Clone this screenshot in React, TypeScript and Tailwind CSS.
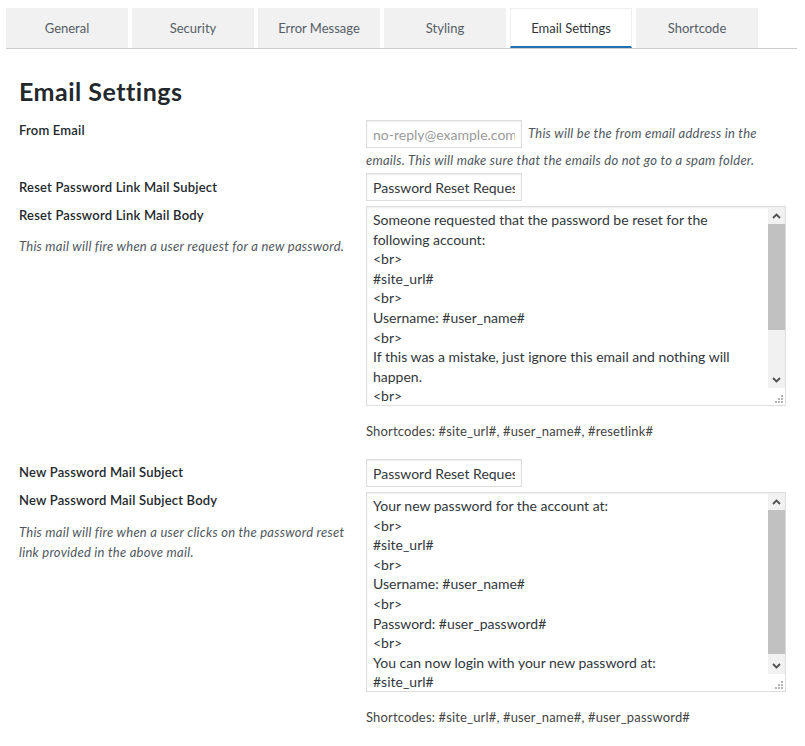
import React from "react";

const tabs = ["General", "Security", "Error Message", "Styling", "Email Settings", "Shortcode"];

const resetBody = [
  "Someone requested that the password be reset for the",
  "following account:",
  "<br>",
  "#site_url#",
  "<br>",
  "Username: #user_name#",
  "<br>",
  "If this was a mistake, just ignore this email and nothing will",
  "happen.",
  "<br>",
];

const newBody = [
  "Your new password for the account at:",
  "<br>",
  "#site_url#",
  "<br>",
  "Username: #user_name#",
  "<br>",
  "Password: #user_password#",
  "<br>",
  "You can now login with your new password at:",
  "#site_url#",
];

function Chevron({ up }: { up?: boolean }) {
  return (
    <svg width="9" height="6" viewBox="0 0 9 6" className="block">
      <polyline
        points={up ? "1,5 4.5,1.5 8,5" : "1,1 4.5,4.5 8,1"}
        fill="none"
        stroke="#505050"
        strokeWidth="1.8"
      />
    </svg>
  );
}

function Grip() {
  return (
    <svg width="8" height="8" viewBox="0 0 8 8" className="block">
      <g fill="#b4b4b4">
        <rect x="6" y="0" width="2" height="2" />
        <rect x="3" y="3" width="2" height="2" />
        <rect x="6" y="3" width="2" height="2" />
        <rect x="0" y="6" width="2" height="2" />
        <rect x="3" y="6" width="2" height="2" />
        <rect x="6" y="6" width="2" height="2" />
      </g>
    </svg>
  );
}

function FakeTextarea({ lines, thumb }: { lines: string[]; thumb: string }) {
  return (
    <div className="flex h-[200px] w-full overflow-hidden border border-[#dddddd] bg-white shadow-[inset_0_1px_2px_rgba(0,0,0,0.07)]">
      <div className="min-w-0 flex-1 overflow-hidden pl-[6px] pt-[3px] text-[14px] leading-[1.4] text-[#32373c]">
        {lines.map((l, i) => (
          <div key={i} className="whitespace-nowrap">
            {l}
          </div>
        ))}
      </div>
      <div className="flex w-[17px] flex-none flex-col">
        <div className="flex h-[17px] items-center justify-center bg-[#f1f1f1]">
          <Chevron up />
        </div>
        <div className="flex-1 bg-[#f1f1f1]">
          <div className={`${thumb} w-full bg-[#c1c1c1]`} />
        </div>
        <div className="flex h-[17px] items-center justify-center bg-[#f1f1f1]">
          <Chevron />
        </div>
        <div className="flex h-[17px] items-end justify-end bg-white pb-[2px] pr-[2px]">
          <Grip />
        </div>
      </div>
    </div>
  );
}

function TextInput({ value, placeholder }: { value?: string; placeholder?: string }) {
  return (
    <input
      readOnly
      defaultValue={value}
      placeholder={placeholder}
      className="h-[28px] w-[156px] flex-none border border-[#dddddd] bg-white px-[6px] text-[14px] not-italic tracking-normal text-[#32373c] shadow-[inset_0_1px_2px_rgba(0,0,0,0.07)] outline-none placeholder:text-[#9a9a9a]"
    />
  );
}

export default function App() {
  return (
    <div className="min-h-[746px] w-[805px] bg-white font-['Lato','Liberation_Sans',sans-serif] text-[13px] text-[#444]">
      <div className="ml-[6px] mr-[8px] flex gap-[4px] border-b border-[#cccccc] pt-[8px]">
        {tabs.map((t) =>
          t === "Email Settings" ? (
            <div
              key={t}
              className="flex h-[40px] w-[122px] items-center justify-center border border-b-2 border-[#eeeeee] border-b-[#2271b1] bg-white pt-[2px] text-[#32373c]"
            >
              {t}
            </div>
          ) : (
            <div
              key={t}
              className="flex h-[40px] w-[122px] items-center justify-center bg-[#f1f1f1] pt-[2px] text-[#555d66]"
            >
              {t}
            </div>
          )
        )}
      </div>

      <div className="px-[19px]">
        <h1 className="mt-[28px] text-[25px] font-bold leading-[29px] tracking-[0.5px] text-[#23282d]">
          Email Settings
        </h1>

        {/* From email */}
        <div className="mt-[14px] grid grid-cols-[347px_1fr]">
          <div className="font-semibold leading-[20px] tracking-[0.2px] text-[#23282d]">From Email</div>
          <div className="italic tracking-[0.25px] text-[#50575e]">
            <div className="flex h-[28px] items-center gap-[6px]">
              <TextInput placeholder="no-reply@example.com" />
              <span className="whitespace-nowrap">This will be the from email address in the</span>
            </div>
            <div className="leading-[24px]">
              emails. This will make sure that the emails do not go to a spam folder.
            </div>
          </div>
        </div>

        {/* Reset subject */}
        <div className="mt-[1px] grid grid-cols-[347px_1fr]">
          <div className="pt-[4px] font-semibold leading-[20px] tracking-[0.2px] text-[#23282d]">
            Reset Password Link Mail Subject
          </div>
          <div>
            <TextInput value="Password Reset Request" />
          </div>
        </div>

        {/* Reset body */}
        <div className="mt-[5px] grid grid-cols-[347px_1fr]">
          <div className="-mt-[1px]">
            <div className="font-semibold leading-[20px] tracking-[0.2px] text-[#23282d]">
              Reset Password Link Mail Body
            </div>
            <p className="mt-[11px] whitespace-nowrap italic leading-[20px] tracking-[0.25px] text-[#50575e]">
              This mail will fire when a user request for a new password.
            </p>
          </div>
          <div>
            <FakeTextarea lines={resetBody} thumb="h-[106px]" />
            <p className="mt-[15px] leading-[20px] tracking-[0.15px]">
              Shortcodes: #site_url#, #user_name#, #resetlink#
            </p>
          </div>
        </div>

        {/* New password subject */}
        <div className="mt-[18px] grid grid-cols-[347px_1fr]">
          <div className="pt-[3px] font-semibold leading-[20px] tracking-[0.2px] text-[#23282d]">
            New Password Mail Subject
          </div>
          <div>
            <TextInput value="Password Reset Request" />
          </div>
        </div>

        {/* New password body */}
        <div className="mt-[5px] grid grid-cols-[347px_1fr]">
          <div className="-mt-[2px]">
            <div className="font-semibold leading-[20px] tracking-[0.2px] text-[#23282d]">
              New Password Mail Subject Body
            </div>
            <p className="mt-[12px] whitespace-nowrap italic leading-[20px] tracking-[0.25px] text-[#50575e]">
              This mail will fire when a user clicks on the password reset
              <br />
              link provided in the above mail.
            </p>
          </div>
          <div>
            <FakeTextarea lines={newBody} thumb="h-[144px]" />
            <p className="mt-[15px] leading-[20px] tracking-[0.15px]">
              Shortcodes: #site_url#, #user_name#, #user_password#
            </p>
          </div>
        </div>
      </div>
    </div>
  );
}
